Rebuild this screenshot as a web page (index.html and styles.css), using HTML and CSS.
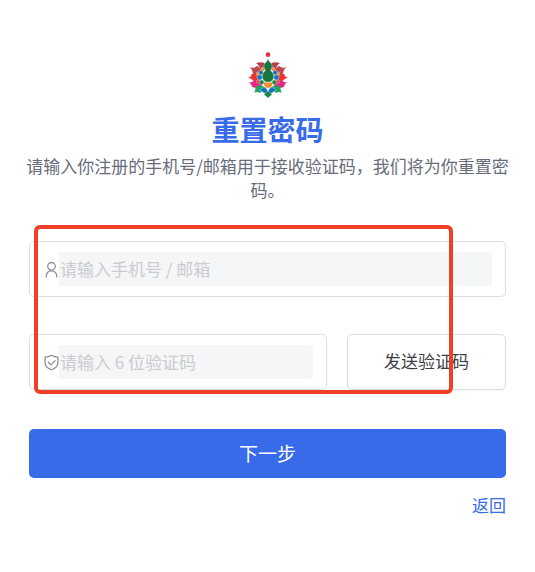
FILE: index.html
```html
<!DOCTYPE html>
<html lang="zh-CN">
<head>
    <meta charset="UTF-8">
    <meta name="viewport" content="width=device-width, initial-scale=1.0">
    <title>重置密码</title>
    <link rel="stylesheet" href="styles.css">
</head>
<body>

    <main class="reset-page">
        <header class="reset-header">
            <svg class="logo" viewBox="30 24 120 138" aria-hidden="true">
                <circle cx="90" cy="32" r="7" fill="#e8304a"/>
                <!-- outer petals -->
                <g id="petals">
                    <path fill="#b5414a" d="M54 58 Q66 53 78 56 Q85 61 84 72 L74 82 Q65 78 64 68 Q60 61 54 58z"/>
                    <path fill="#c0474c" d="M34 70 Q49 74 58 66 Q70 73 70 90 L56 97 Q44 92 43 80 Q40 73 34 70z"/>
                    <path fill="#ee3338" d="M28 102 Q40 100 41 90 Q58 86 70 108 L56 115 Q44 110 40 105 Q35 102 28 102z"/>
                    <path fill="#e92683" d="M33 114 Q44 117 48 109 Q62 107 73 124 L62 128 Q51 134 42 128 Q40 119 33 114z"/>
                    <path fill="#20a562" d="M47 146 Q54 140 52 128 Q66 120 82 130 Q79 140 72 142 Q66 150 60 144 Q55 143 47 146z"/>
                </g>
                <use href="#petals" transform="translate(180 0) scale(-1 1)"/>
                <!-- inner petals -->
                <g id="inner" stroke="#fff" stroke-width="1">
                    <circle cx="75" cy="76" r="6" fill="#f58b3c"/>
                    <circle cx="61" cy="90" r="6" fill="#f58b3c"/>
                    <circle cx="69" cy="86" r="7" fill="#1571b8"/>
                    <circle cx="60" cy="113" r="5" fill="#ee3338"/>
                    <circle cx="65" cy="100" r="8" fill="#1579c0"/>
                    <circle cx="71" cy="115" r="7" fill="#15854a"/>
                    <path fill="#1272bd" d="M65 140 Q71 128 82 131 Q91 136 88 144 Q80 151 75 145 Q72 141 65 140z"/>
                </g>
                <use href="#inner" transform="translate(180 0) scale(-1 1)"/>
                <path fill="#f58b32" d="M76 114 Q90 119 104 114 Q104 126 96 131 H84 Q77 126 76 114z"/>
                <path fill="#15854a" d="M78 152 Q85 145 90 142 Q95 145 102 152 Q96 155 90 162 Q84 155 78 152z"/>
                <path fill="#187741" stroke="#fff" stroke-width="1" d="M90 42 Q91 53 99 57 Q107 66 99 76 L98 80 Q109 87 107 102 Q104 114 90 115 Q76 114 73 102 Q71 87 82 80 L81 76 Q73 66 81 57 Q89 53 90 42z"/>
            </svg>
            <h1 class="title">重置密码</h1>
            <p class="subtitle">请输入你注册的手机号/邮箱用于接收验证码，我们将为你重置密码。</p>
        </header>

        <form class="reset-form">
            <div class="field">
                <label for="account" aria-label="手机号 / 邮箱">
                    <svg class="icon" viewBox="0 0 14 16">
                        <circle cx="7" cy="5" r="3.6"/>
                        <path d="M2 15c0-3.600 2.100-5.800 5-5.800s5 2.200 5 5.800"/>
                    </svg>
                </label>
                <input type="text" id="account" placeholder="请输入手机号 / 邮箱">
            </div>

            <div class="code-row">
                <div class="field">
                    <label for="code" aria-label="验证码">
                        <svg class="icon" viewBox="0 0 14 16">
                            <path d="M7 1.200Q9.800 3 13 3v5.400c0 3-2.500 5-6 6.400-3.500-1.400-6-3.400-6-6.400V3Q4.200 3 7 1.200z"/>
                            <path d="M4 7.800l2.400 2.400L10.400 6.200"/>
                        </svg>
                    </label>
                    <input type="text" id="code" placeholder="请输入 6 位验证码">
                </div>
                <button type="button" class="send-btn">发送验证码</button>
            </div>

            <button type="submit" class="next-btn">下一步</button>
            <a class="back-link" href="#">返回</a>

            <div class="highlight"></div>
        </form>
    </main>

</body>
</html>
```
FILE: styles.css
```css
* {
    box-sizing: border-box;
}

body {
    margin: 0;
    background-color: #fff;
    font-family: "Noto Sans CJK SC", sans-serif;
    font-size: 17px;
    line-height: 24px;
}

input, button {
    font: inherit;
}

.reset-page {
    padding: 52px 20px;
}

.reset-header {
    text-align: center;
}

.logo {
    display: block;
    width: 40px;
    height: 46px;
    margin: 0 auto;
}

.title {
    margin: 11px 0 5px;
    color: #386bea;
    font-size: 28px;
    line-height: 40px;
    font-weight: bold;
}

.subtitle {
    margin: 0;
    color: #686c7b;
}

.reset-form {
    position: relative;
    display: flex;
    flex-direction: column;
    margin: 39px 9px 0;
}

.field {
    display: flex;
    align-items: center;
    flex: 1;
    min-width: 0;
    height: 56px;
    padding: 0 13px 0 14px;
    border: 1px solid #dcdee2;
    border-radius: 5px;
}

.reset-form > .field {
    flex: none;
}

.field label {
    display: flex;
}

.icon {
    width: 15px;
    height: 17px;
    fill: none;
    stroke: #8b8f9c;
    stroke-width: 1.2;
    stroke-linecap: round;
    stroke-linejoin: round;
}

.field input {
    flex: 1;
    min-width: 0;
    height: 34px;
    padding: 0 1px 2px;
    border: none;
    border-radius: 2px;
    background-color: #f5f6f8;
    color: #3c3f48;
}

.field input::placeholder {
    color: #cbcccf;
}

.code-row {
    display: flex;
    gap: 20px;
    margin: 37px 0 39px;
}

.send-btn {
    flex: 0 0 33.3%;
    padding-bottom: 3px;
    border: 1px solid #dcdde3;
    border-radius: 5px;
    background-color: #fff;
    box-shadow: 0 1px 1px rgba(0, 0, 0, 0.04);
    color: #3c3f48;
    cursor: pointer;
}

.next-btn {
    height: 49px;
    padding-bottom: 3px;
    border: none;
    border-radius: 5px;
    background-color: #386bea;
    color: #fff;
    font-size: 19px;
    cursor: pointer;
}

.back-link {
    align-self: flex-end;
    margin-top: 15px;
    color: #386bea;
    text-decoration: none;
}

/* red frame over the inputs */
.highlight {
    position: absolute;
    top: -16px;
    left: 5px;
    right: 53px;
    height: 169px;
    border: 4px solid #ef3f26;
    border-radius: 6px;
    pointer-events: none;
}
```
